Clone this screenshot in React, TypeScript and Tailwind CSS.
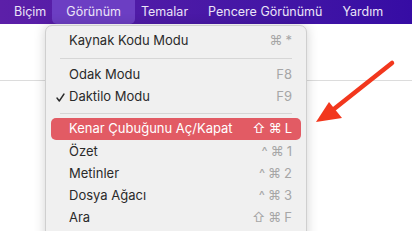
const menuBar = ['Biçim', 'Görünüm', 'Temalar', 'Pencere Görünümü', 'Yardım']

type Item = { label: string; keys: string[]; checked?: boolean; active?: boolean }

function Row({ label, keys, checked, active }: Item) {
  return (
    <div
      className={`mx-[5px] h-[22px] flex items-center justify-between pl-[18px] pr-[9px] rounded-[5px] relative ${
        active ? 'bg-[#e25b64] text-white mb-[1px]' : 'text-[#2a2a2a]'
      }`}
    >
      {checked && (
        <svg className="absolute left-[5px] top-[7px]" width="9" height="9" viewBox="0 0 9 9">
          <path d="M1 5 L3.3 8 L8 1" fill="none" stroke="#2a2a2a" strokeWidth="1.4" strokeLinecap="round" strokeLinejoin="round" />
        </svg>
      )}
      <span>{label}</span>
      <span className={`flex gap-[3px] text-[13px] ${active ? 'text-white' : 'text-[#a6a6a6]'}`}>
        {keys.map((k, i) => (
          <span key={i}>{k}</span>
        ))}
      </span>
    </div>
  )
}

export default function App() {
  return (
    <div className="w-[412px] h-[231px] overflow-hidden bg-white relative font-['Inter','Noto_Sans',sans-serif] text-[13px]">
      {/* menu bar */}
      <div className="h-[24px] flex items-center pl-[4px] bg-gradient-to-r from-[#5c1fa8] to-[#360ca4] text-[#ebe4f7] text-[12.5px]">
        {menuBar.map((m) => (
          <div
            key={m}
            className={`h-full flex items-center ${
              m === 'Görünüm' ? 'px-[14px] mx-[-4px] bg-[#6c3ec3] rounded-b-[5px]' : 'px-[10px]'
            }`}
          >
            {m}
          </div>
        ))}
      </div>

      {/* window toolbar behind */}
      <div className="h-[57px] border-b border-[#dcdcdc]" />

      {/* dropdown */}
      <div className="absolute left-[45px] top-[25px] w-[262px] h-[220px] bg-[#f0f0f0] border border-[#cfcfcf] rounded-t-[7px] shadow-[0_0_12px_rgba(0,0,0,0.18)] pt-[4px]">
        <Row label="Kaynak Kodu Modu" keys={['⌘', '*']} />
        <div className="mx-[14px] mt-[6px] mb-[5px] h-px bg-[#d6d6d6]" />
        <Row label="Odak Modu" keys={['F8']} />
        <Row label="Daktilo Modu" keys={['F9']} checked />
        <div className="mx-[14px] mt-[5px] mb-[4px] h-px bg-[#d6d6d6]" />
        <Row label="Kenar Çubuğunu Aç/Kapat" keys={['⇧', '⌘', 'L']} active />
        <Row label="Özet" keys={['^', '⌘', '1']} />
        <Row label="Metinler" keys={['^', '⌘', '2']} />
        <Row label="Dosya Ağacı" keys={['^', '⌘', '3']} />
        <Row label="Ara" keys={['⇧', '⌘', 'F']} />
      </div>

      {/* arrow */}
      <svg className="absolute left-0 top-0" width="412" height="231" viewBox="0 0 412 231">
        <line x1="392" y1="63" x2="334" y2="109" stroke="#f2371d" strokeWidth="4.5" strokeLinecap="round" />
        <polygon points="316,122 329,102 342,118" fill="#f2371d" />
      </svg>
    </div>
  )
}
